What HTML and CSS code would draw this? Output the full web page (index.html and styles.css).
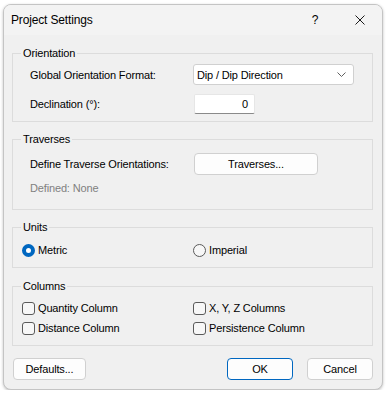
FILE: index.html
```html
<!DOCTYPE html>
<html>
  <head>
    <title>Project Settings</title>
    <link rel="stylesheet" href="styles.css">
  </head>
  <body>
    <div class="window">
      <div class="titlebar">
        <span class="title">Project Settings</span>
        <span class="help">?</span>
        <span class="close">
          <svg width="10" height="10" viewBox="0 0 10 10"><path d="M0.5 0.5 L9.5 9.5 M9.5 0.5 L0.5 9.5" stroke="#1a1a1a" stroke-width="1" fill="none"/></svg>
        </span>
      </div>
      <div class="content">
        <fieldset class="group group-orientation">
          <legend>Orientation</legend>
          <div class="row row-format">
            <span class="label">Global Orientation Format:</span>
            <div class="select">
              <span>Dip / Dip Direction</span>
              <svg width="9" height="5" viewBox="0 0 9 5"><path d="M0.5 0.5 L4.5 4.5 L8.5 0.5" stroke="#606060" stroke-width="1" fill="none"/></svg>
            </div>
          </div>
          <div class="row row-decl">
            <span class="label">Declination (&deg;):</span>
            <div class="numbox">0</div>
          </div>
        </fieldset>

        <fieldset class="group group-traverses">
          <legend>Traverses</legend>
          <div class="row row-trav">
            <span class="label">Define Traverse Orientations:</span>
            <button class="btn btn-trav">Traverses...</button>
          </div>
          <div class="defined">Defined: None</div>
        </fieldset>

        <fieldset class="group group-units">
          <legend>Units</legend>
          <div class="opts">
            <label class="opt"><span class="radio checked"></span>Metric</label>
            <label class="opt"><span class="radio"></span>Imperial</label>
          </div>
        </fieldset>

        <fieldset class="group group-columns">
          <legend>Columns</legend>
          <div class="opts">
            <label class="opt"><span class="check"></span>Quantity Column</label>
            <label class="opt"><span class="check"></span>X, Y, Z Columns</label>
            <label class="opt"><span class="check"></span>Distance Column</label>
            <label class="opt"><span class="check"></span>Persistence Column</label>
          </div>
        </fieldset>

        <div class="footer">
          <button class="btn btn-defaults">Defaults...</button>
          <button class="btn btn-ok">OK</button>
          <button class="btn btn-cancel">Cancel</button>
        </div>
      </div>
    </div>
  </body>
</html>
```

FILE: styles.css
```css
body {
  margin: 0;
  background-color: white;
  font-family: "Liberation Sans", Arial, sans-serif;
  font-size: 11px;
  letter-spacing: -0.15px;
  color: #000;
}
.window {
  margin: 4px 3px 0 3px;
  width: 378px;
  height: 384px;
  border: 1px solid #c4c4c4;
  border-radius: 8px;
  background-color: #f0f0f0;
  box-shadow: 0 1px 3px rgba(0, 0, 0, 0.25);
  overflow: hidden;
}
.titlebar {
  height: 30px;
  background-color: #f3f3f3;
  display: flex;
  align-items: center;
  font-size: 12px;
}
.title {
  margin-left: 7px;
  flex: 1;
}
.help {
  width: 14px;
  margin-right: 33px;
  text-align: center;
}
.close {
  display: flex;
  margin-right: 17px;
}
.content {
  padding: 10px 9px 0 8px;
}
.group {
  margin: 0 0 9px 0;
  padding: 0 12px 0 9px;
  border: 1px solid #dcdcdc;
  min-inline-size: 0;
}
.group legend {
  padding: 0 2px;
  margin-left: -1px;
  line-height: 16px;
}
.row {
  display: flex;
  align-items: center;
}
.label {
  width: 171px;
  padding-left: 8px;
  box-sizing: border-box;
}
.group-orientation {
  padding-top: 3px;
  padding-bottom: 7px;
}
.row-format {
  height: 21px;
  margin-bottom: 9px;
}
.select {
  width: 161px;
  height: 21px;
  box-sizing: border-box;
  border: 1px solid #d0d0d0;
  border-radius: 3px;
  background-color: white;
  display: flex;
  align-items: center;
  justify-content: space-between;
  padding: 0 7px 0 3px;
}
.row-decl {
  height: 20px;
}
.numbox {
  width: 61px;
  height: 20px;
  box-sizing: border-box;
  margin-left: 1px;
  background-color: white;
  border: 1px solid #e6e6e6;
  border-bottom: 1px solid #8a8a8a;
  border-radius: 2px;
  text-align: right;
  padding-right: 6px;
  line-height: 18px;
}
.group-traverses {
  padding-top: 6px;
  padding-bottom: 13px;
}
.row-trav {
  height: 22px;
}
.btn {
  font-family: inherit;
  font-size: 11px;
  letter-spacing: inherit;
  color: #000;
  background-color: #fdfdfd;
  border: 1px solid #d0d0d0;
  border-radius: 4px;
  height: 22px;
  padding: 0;
}
.btn-trav {
  width: 124px;
  margin-left: 1px;
}
.defined {
  color: #808080;
  line-height: 16px;
  margin-top: 5px;
  padding-left: 8px;
}
.group-units {
  padding-top: 7px;
  padding-bottom: 9px;
  margin-bottom: 10px;
}
.opts {
  display: grid;
  grid-template-columns: 171px 1fr;
  row-gap: 4px;
}
.opt {
  display: flex;
  align-items: center;
  height: 16px;
  gap: 3px;
}
.radio {
  width: 13px;
  height: 13px;
  box-sizing: border-box;
  border: 1px solid #5a5a5a;
  border-radius: 50%;
  background-color: #f7f7f7;
}
.radio.checked {
  border: 4px solid #0067c0;
  background-color: white;
}
.check {
  width: 13px;
  height: 13px;
  box-sizing: border-box;
  border: 1px solid #5a5a5a;
  border-radius: 3px;
  background-color: #f7f7f7;
}
.group-columns {
  padding-top: 6px;
  padding-bottom: 9px;
  margin-bottom: 12px;
}
.footer {
  display: flex;
  padding-left: 1px;
}
.btn-defaults {
  width: 73px;
}
.btn-ok {
  width: 66px;
  margin-left: auto;
  border-color: #0067c0;
}
.btn-cancel {
  width: 66px;
  margin-left: 14px;
}
```
